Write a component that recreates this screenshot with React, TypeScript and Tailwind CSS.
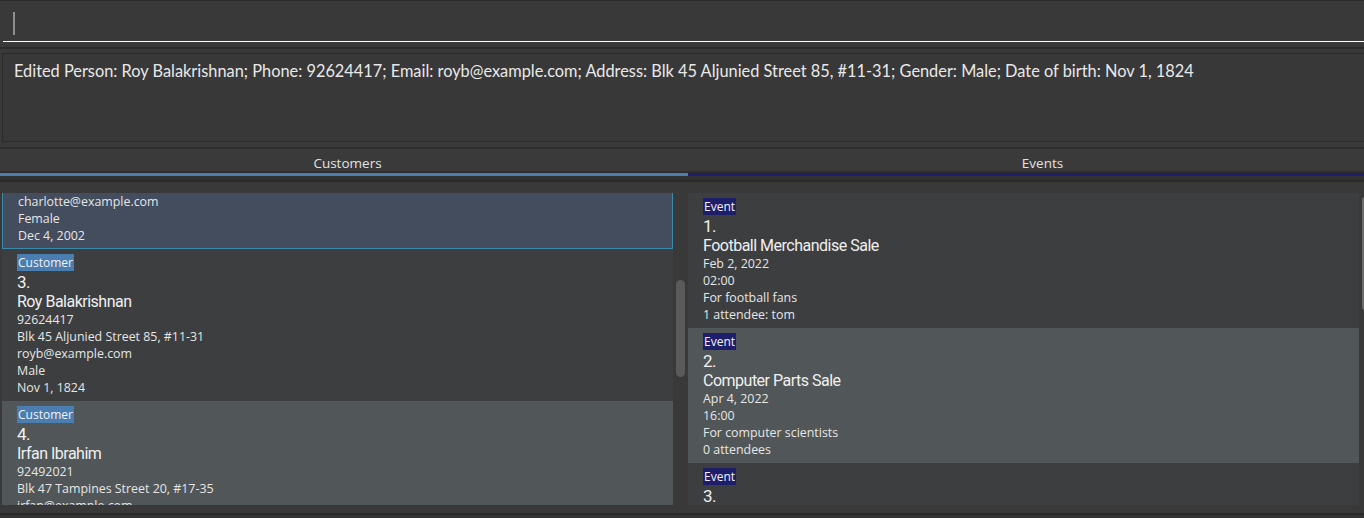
import React from "react";

type Customer = {
  idx: number;
  name: string;
  phone: string;
  address: string;
  email: string;
  gender: string;
  dob: string;
};

type Event = {
  idx: number;
  name: string;
  date: string;
  time: string;
  desc: string;
  attendees: string;
};

const customers: (Customer & { tone: string; offset?: string })[] = [
  {
    idx: 2,
    name: "Charlotte Oliveiro",
    phone: "93210283",
    address: "Blk 30 Lorong 3 Serangoon Gardens, #07-18",
    email: "charlotte@example.com",
    gender: "Female",
    dob: "Dec 4, 2002",
    tone: "selected",
    offset: "-mt-[96px]",
  },
  {
    idx: 3,
    name: "Roy Balakrishnan",
    phone: "92624417",
    address: "Blk 45 Aljunied Street 85, #11-31",
    email: "royb@example.com",
    gender: "Male",
    dob: "Nov 1, 1824",
    tone: "dark",
  },
  {
    idx: 4,
    name: "Irfan Ibrahim",
    phone: "92492021",
    address: "Blk 47 Tampines Street 20, #17-35",
    email: "irfan@example.com",
    gender: "Male",
    dob: "Jan 12, 1999",
    tone: "light",
  },
];

const events: (Event & { tone: string })[] = [
  {
    idx: 1,
    name: "Football Merchandise Sale",
    date: "Feb 2, 2022",
    time: "02:00",
    desc: "For football fans",
    attendees: "1 attendee: tom",
    tone: "dark",
  },
  {
    idx: 2,
    name: "Computer Parts Sale",
    date: "Apr 4, 2022",
    time: "16:00",
    desc: "For computer scientists",
    attendees: "0 attendees",
    tone: "light",
  },
  {
    idx: 3,
    name: "Book Fair",
    date: "May 6, 2022",
    time: "10:00",
    desc: "For readers",
    attendees: "0 attendees",
    tone: "dark",
  },
];

const toneClass: Record<string, string> = {
  dark: "bg-[#3c3e40]",
  light: "bg-[#515658]",
  selected: "bg-[#434d5e] border border-t-0 border-[#3a8aab]",
};

const Line = ({ children }: { children: React.ReactNode }) => (
  <div className="h-[17px] leading-[17px] text-[12.4px] text-[#e6e6e6] whitespace-nowrap">{children}</div>
);

const CardHead = ({ tag, tagBg, idx, name }: { tag: string; tagBg: string; idx: number; name: string }) => (
  <>
    <div className="h-[19px] flex items-start">
      <span className={`${tagBg} px-[1px] h-[17px] text-[12px] leading-[17px] text-[#f2f2f2]`}>{tag}</span>
    </div>
    <div className="h-[19px] leading-[19px] text-[17px] text-[#f0f0f0] font-['Roboto'] tracking-[-0.5px]">{idx}.</div>
    <div className="h-[19px] leading-[19px] text-[16px] text-[#f0f0f0] font-['Roboto'] tracking-[-0.5px] whitespace-nowrap">
      {name}
    </div>
  </>
);

export default function App() {
  return (
    <div className="w-[1364px] h-[518px] overflow-hidden bg-[#393939] flex flex-col font-['Open_Sans',sans-serif]">
      {/* Command box */}
      <div className="h-[47px] shrink-0 border-t border-[#2b2b2b] pl-[3px]">
        <div className="h-[41px] border-b border-white pl-[10px] pt-[11px]">
          <div className="w-[2px] h-[23px] bg-[#8e8e8e]" />
        </div>
      </div>
      <div className="h-[2px] shrink-0 bg-[#2d2d2d]" />

      {/* Result display */}
      <div className="h-[98px] shrink-0 pt-[4px] pb-[5px] pl-[2px]">
        <div className="h-full border border-r-0 border-[#2b2b2b] bg-[#383838] pl-[11px] pt-[6px]">
          <p className="text-[16.35px] leading-[22px] text-[#e8e8e8] font-['Lato'] whitespace-nowrap">
            Edited Person: Roy Balakrishnan; Phone: 92624417; Email: royb@example.com; Address: Blk 45 Aljunied
            Street 85, #11-31; Gender: Male; Date of birth: Nov 1, 1824
          </p>
        </div>
      </div>

      {/* Tabs */}
      <div className="shrink-0 border-t-2 border-[#2e2e2e]">
        <div className="h-[22px] flex bg-[#3a3a3a] overflow-hidden">
          <div className="w-[695px] shrink-0 text-center text-[13.5px] leading-[28px] text-[#e2e2e2]">Customers</div>
          <div className="w-[695px] shrink-0 text-center text-[13.5px] leading-[28px] text-[#e2e2e2]">Events</div>
        </div>
        <div className="h-[2px] bg-[#2f2f2f]" />
        <div className="h-[3px] flex">
          <div className="w-[688px] bg-[#4a7fb0]" />
          <div className="flex-1 bg-[#1f1f6e]" />
        </div>
        <div className="h-[4px] bg-[#313131]" />
        <div className="h-[2px] bg-[#2a2a2a]" />
      </div>

      {/* Lists */}
      <div className="flex-1 flex pt-[11px] bg-[#393939] min-h-0">
        {/* Customers */}
        <div className="w-[688px] shrink-0 flex pl-[2px]">
          <div className="w-[671px] overflow-hidden">
            {customers.map((c) => (
              <div
                key={c.idx}
                className={`${toneClass[c.tone]} ${c.offset ?? ""} h-[152px] pt-[5px] pl-[15px]`}
              >
                <CardHead tag="Customer" tagBg="bg-[#4a7db0]" idx={c.idx} name={c.name} />
                <Line>{c.phone}</Line>
                <Line>{c.address}</Line>
                <Line>{c.email}</Line>
                <Line>{c.gender}</Line>
                <Line>{c.dob}</Line>
              </div>
            ))}
          </div>
          <div className="flex-1 pl-[3px] pt-[87px]">
            <div className="w-[9px] h-[97px] rounded-full bg-[#5a5a5a]" />
          </div>
        </div>

        {/* Events */}
        <div className="flex-1 flex">
          <div className="w-[671px] overflow-hidden">
            {events.map((e) => (
              <div key={e.idx} className={`${toneClass[e.tone]} h-[135px] pl-[15px] pt-[5px]`}>
                <CardHead tag="Event" tagBg="bg-[#1e1e6b]" idx={e.idx} name={e.name} />
                <Line>{e.date}</Line>
                <Line>{e.time}</Line>
                <Line>{e.desc}</Line>
                <Line>{e.attendees}</Line>
              </div>
            ))}
          </div>
          <div className="flex-1 pl-[3px] pt-[4px]">
            <div className="w-[6px] h-[113px] rounded-[3px] bg-[#6a6a6a]" />
          </div>
        </div>
      </div>

      {/* Status bar */}
      <div className="h-[13px] shrink-0 flex flex-col">
        <div className="h-[8px] bg-[#393939]" />
        <div className="h-[2px] bg-[#2a2a2a]" />
        <div className="flex-1 bg-[#333333]" />
      </div>
    </div>
  );
}
